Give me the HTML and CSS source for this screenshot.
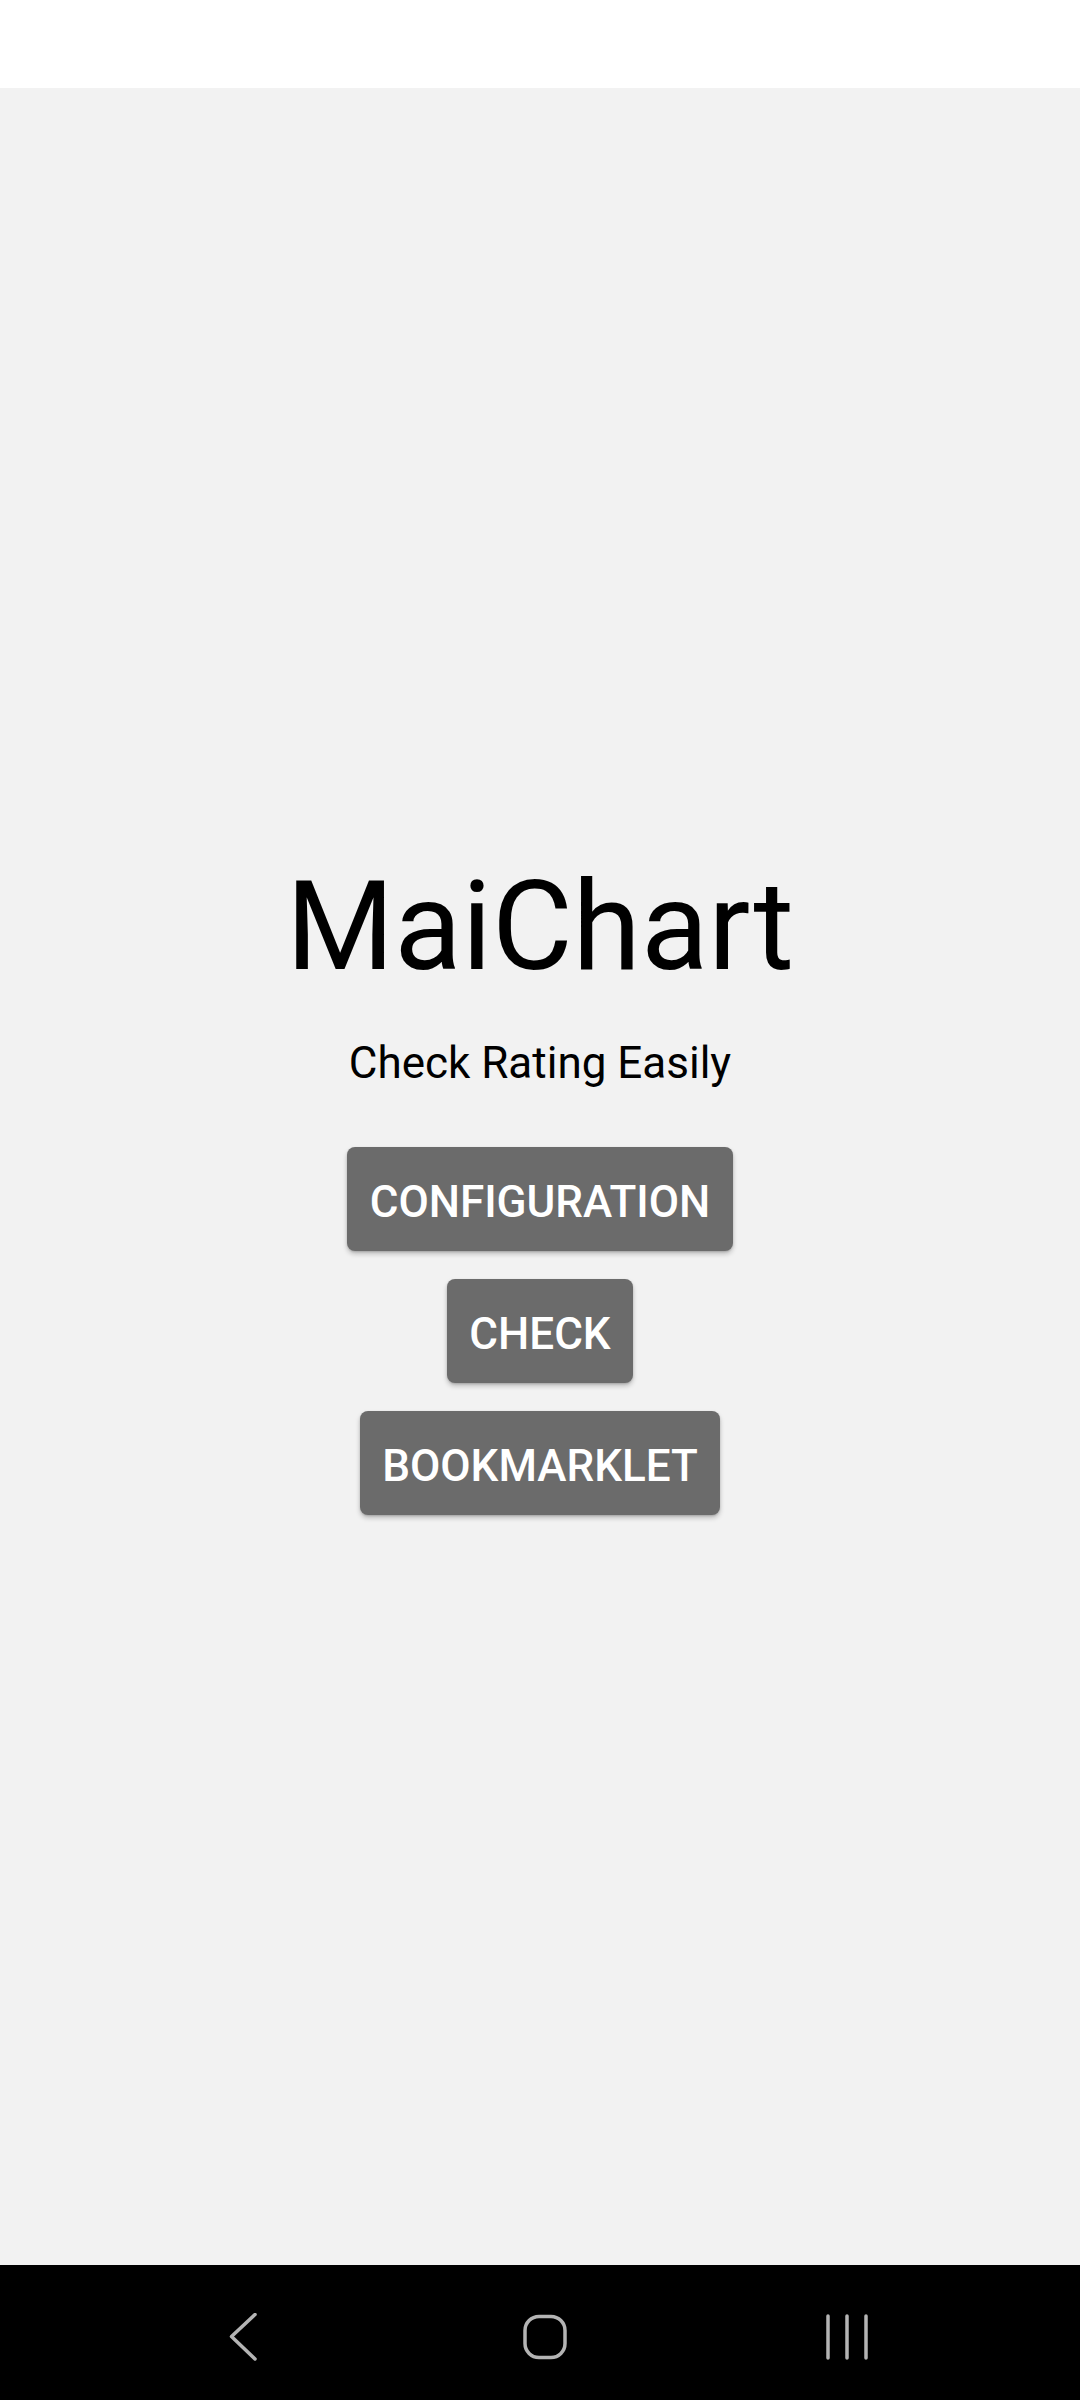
FILE: index.html
```html
<!DOCTYPE html>
<html>
<head>
<meta charset="utf-8">
<link rel="stylesheet" href="styles.css">
</head>
<body>
<div class="screen">
  <div class="status"></div>
  <main class="main">
    <h1 class="title">MaiChart</h1>
    <p class="subtitle">Check Rating Easily</p>
    <div class="buttons">
      <button class="btn">CONFIGURATION</button>
      <button class="btn">CHECK</button>
      <button class="btn">BOOKMARKLET</button>
    </div>
  </main>
  <nav class="nav">
    <div class="cell">
      <svg width="48" height="48" viewBox="0 0 48 48"><path d="M36 1.5 L12.5 23.5 L36 46" fill="none" stroke="#b4b4b4" stroke-width="3.5" stroke-linecap="round" stroke-linejoin="round"/></svg>
    </div>
    <div class="cell">
      <svg width="48" height="48" viewBox="0 0 48 48"><rect x="4" y="3.5" width="40" height="41" rx="14" fill="none" stroke="#b4b4b4" stroke-width="3.5"/></svg>
    </div>
    <div class="cell">
      <svg width="48" height="48" viewBox="0 0 48 48"><path d="M5 3 V45 M24 3 V45 M43 3 V45" fill="none" stroke="#b4b4b4" stroke-width="3.5" stroke-linecap="round"/></svg>
    </div>
  </nav>
</div>
</body>
</html>
```

FILE: styles.css
```css
* { box-sizing: border-box; }
html, body { margin: 0; padding: 0; }
body { font-family: Roboto, "Noto Sans", sans-serif; background: #f2f2f2; }
.screen { width: 1080px; height: 2400px; display: flex; flex-direction: column; }
.status { height: 88px; background: #ffffff; flex: none; }
.main {
  flex: 1;
  background: #f2f2f2;
  display: flex;
  flex-direction: column;
  align-items: center;
  justify-content: center;
  padding-top: 15px;
}
.title {
  margin: 0;
  font-size: 124px;
  line-height: 145px;
  font-weight: 400;
  color: #000;
}
.subtitle {
  margin: 38px 0 0;
  font-size: 44px;
  line-height: 52px;
  color: #000;
}
.buttons {
  margin-top: 58px;
  display: flex;
  flex-direction: column;
  align-items: center;
  gap: 28px;
}
.btn {
  height: 104px;
  padding: 6px 22.5px 0;
  border: none;
  border-radius: 8px;
  background: #6b6b6b;
  color: #ffffff;
  font-family: Roboto, "Noto Sans", sans-serif;
  font-size: 44px;
  line-height: 52px;
  font-weight: 500;
  display: flex;
  align-items: center;
  justify-content: center;
  box-shadow: 0 3px 5px rgba(0,0,0,0.22), 0 1px 2px rgba(0,0,0,0.15);
}
.nav {
  height: 135px;
  flex: none;
  background: #000;
  display: flex;
  justify-content: center;
  align-items: center;
  padding-left: 10px;
  padding-top: 9px;
}
.cell { width: 302px; display: flex; justify-content: center; align-items: center; }
.cell svg { display: block; }
```
